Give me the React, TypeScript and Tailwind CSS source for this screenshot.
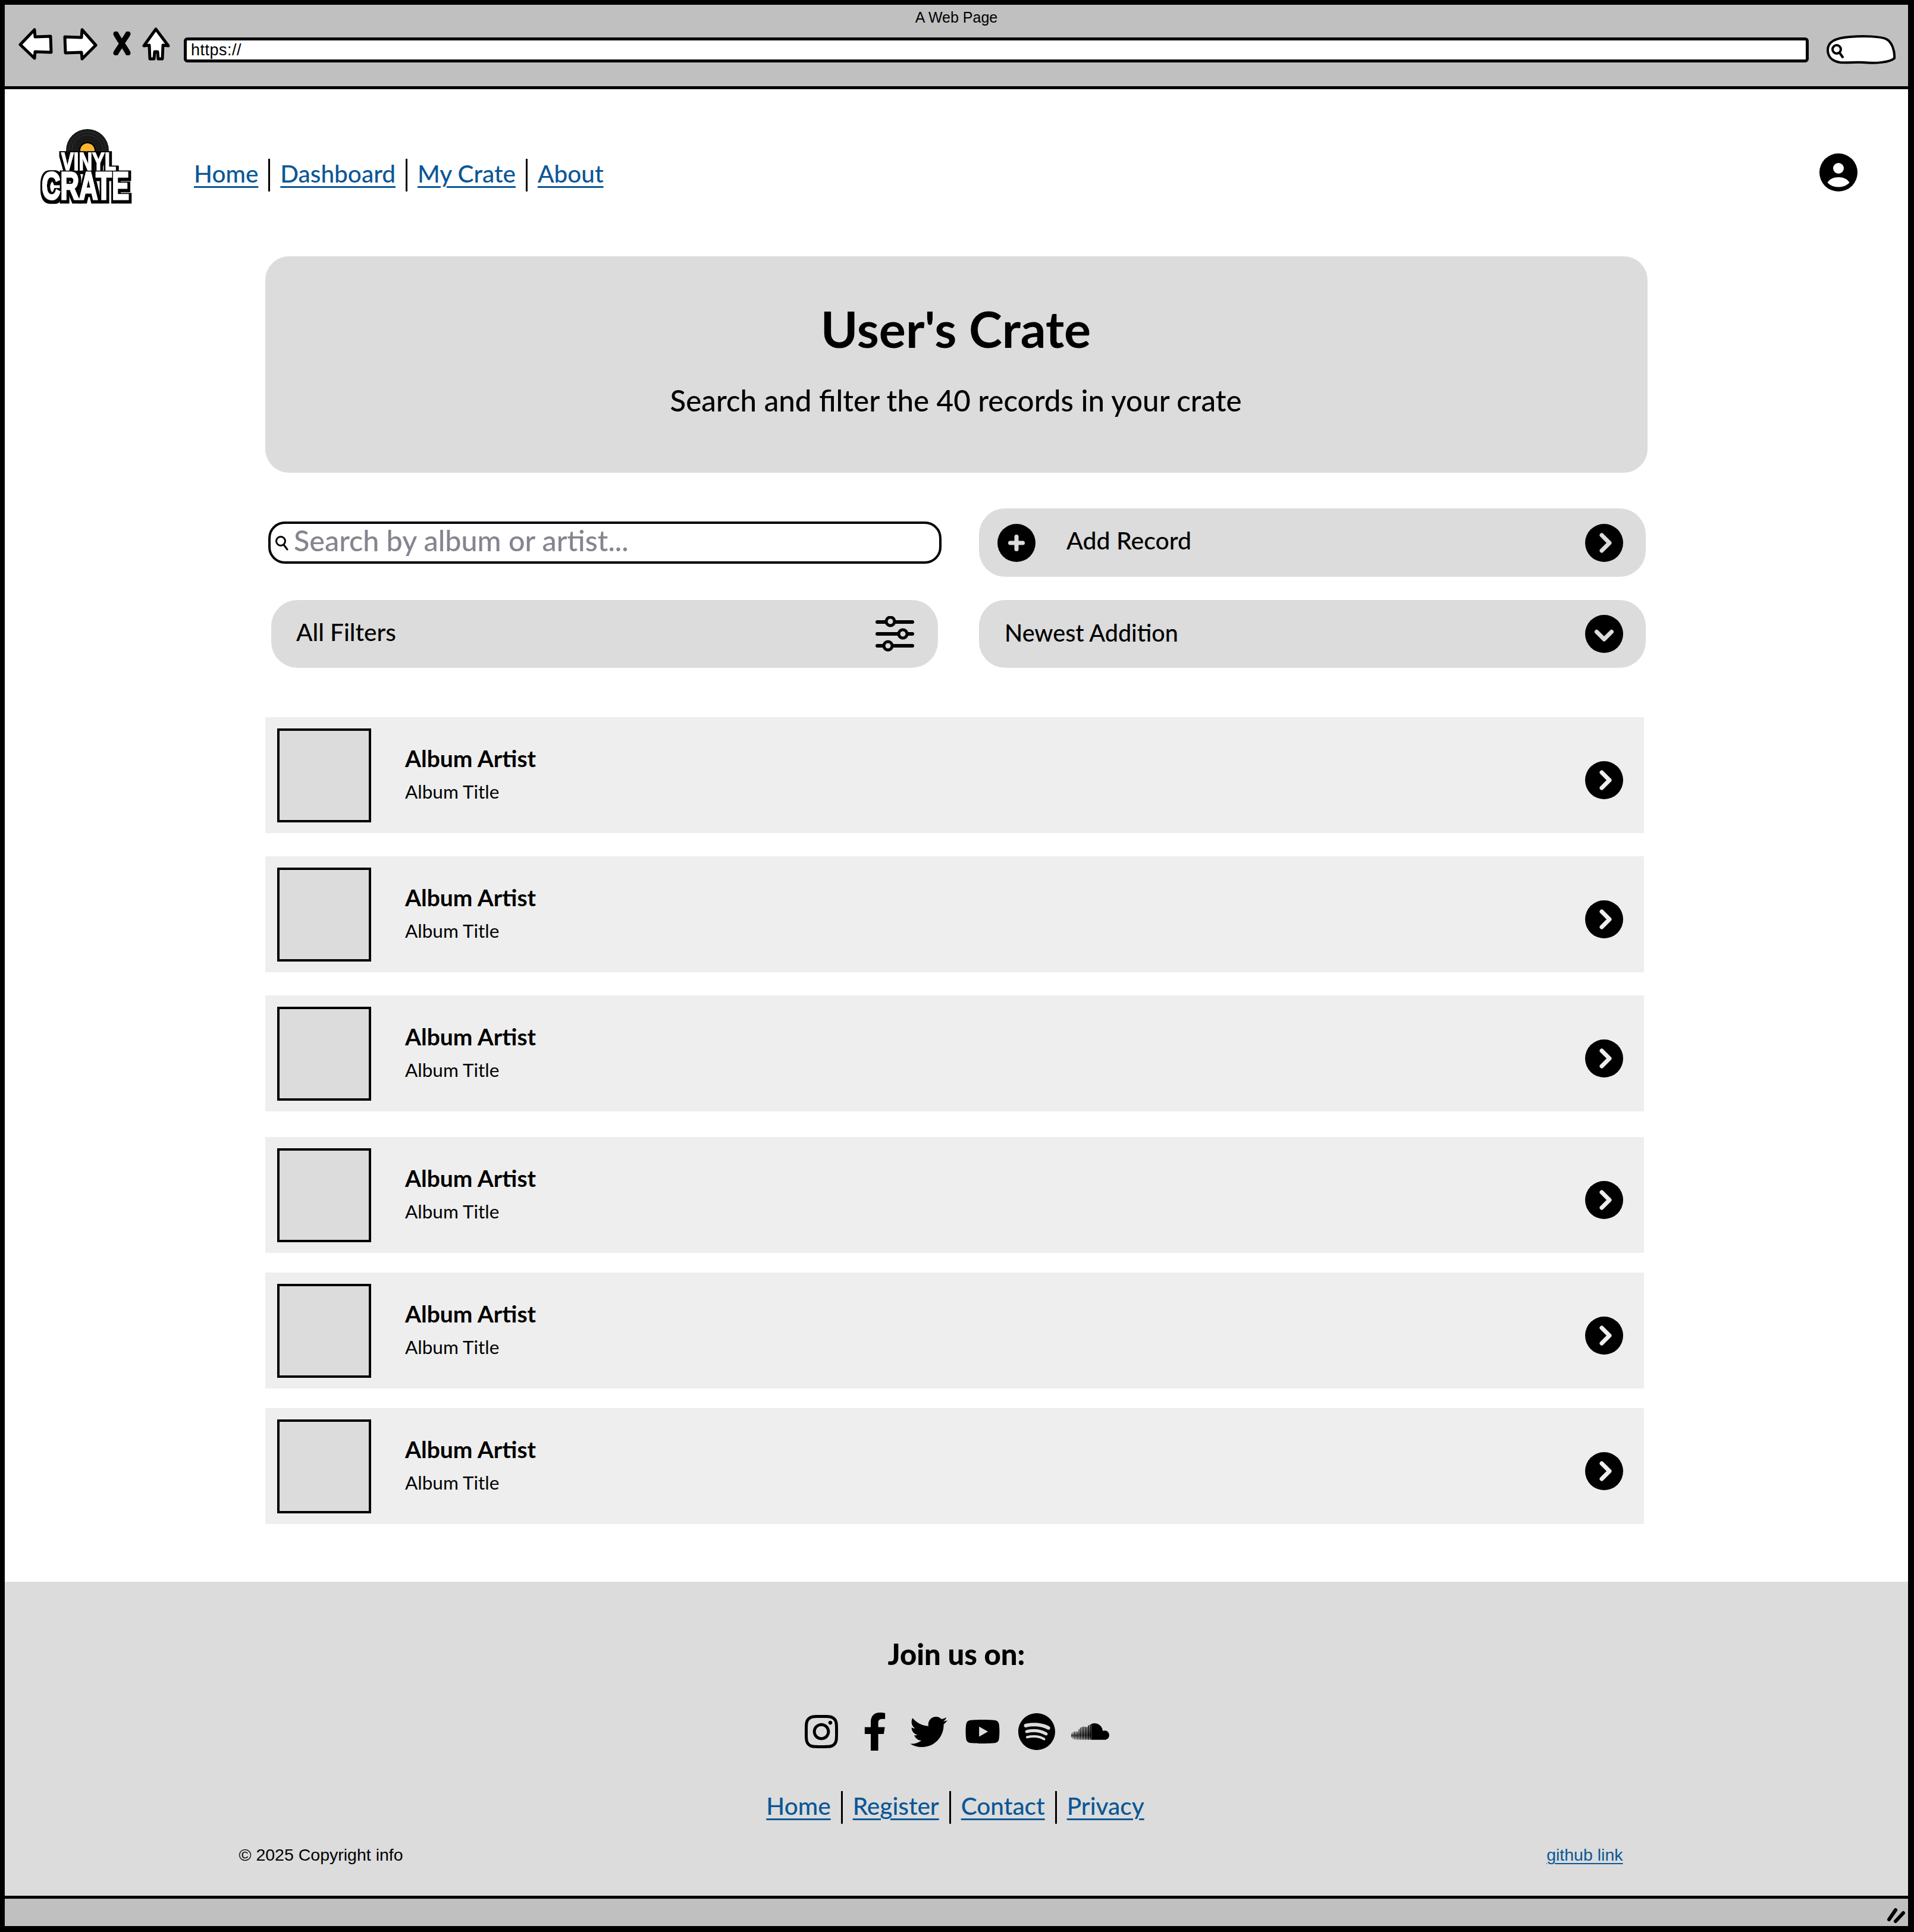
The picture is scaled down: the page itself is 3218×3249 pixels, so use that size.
import { FaInstagram, FaFacebookF, FaTwitter, FaYoutube, FaSpotify, FaSoundcloud } from 'react-icons/fa';

const RECORD_MARGINS = ['mt-0', 'mt-[39px]', 'mt-[39px]', 'mt-[43px]', 'mt-[33px]', 'mt-[33px]'];

function ChevronCircle({ stroke }: { stroke: string }) {
  return (
    <svg width="64" height="64" viewBox="0 0 64 64" className="shrink-0">
      <circle cx="32" cy="32" r="32" fill="#000" />
      <polyline points="28,19 41,32 28,45" fill="none" stroke={stroke} strokeWidth="7" strokeLinecap="round" strokeLinejoin="round" />
    </svg>
  );
}

function ChevronDownCircle() {
  return (
    <svg width="64" height="64" viewBox="0 0 64 64" className="shrink-0">
      <circle cx="32" cy="32" r="32" fill="#000" />
      <polyline points="19.500,28.500 32,41 44.500,28.500" fill="none" stroke="#dcdcdc" strokeWidth="7" strokeLinecap="round" strokeLinejoin="round" />
    </svg>
  );
}

function PlusCircle() {
  return (
    <svg width="64" height="64" viewBox="0 0 64 64" className="shrink-0">
      <circle cx="32" cy="32" r="32" fill="#000" />
      <path d="M32 21.500v21M21.500 32h21" fill="none" stroke="#dcdcdc" strokeWidth="7" strokeLinecap="round" />
    </svg>
  );
}

function Sliders() {
  return (
    <svg width="65" height="60" viewBox="0 0 65 60" className="shrink-0">
      <path d="M3 10h59M3 30h59M3 50h59" stroke="#000" strokeWidth="6" strokeLinecap="round" />
      <circle cx="25" cy="9" r="7" fill="#dcdcdc" stroke="#000" strokeWidth="5" />
      <circle cx="46" cy="30" r="7" fill="#dcdcdc" stroke="#000" strokeWidth="5" />
      <circle cx="21" cy="50" r="7" fill="#dcdcdc" stroke="#000" strokeWidth="5" />
    </svg>
  );
}

function UserIcon() {
  return (
    <svg width="64" height="64" viewBox="0 0 64 64" className="shrink-0">
      <circle cx="32" cy="32" r="32" fill="#000" />
      <circle cx="32" cy="25" r="9" fill="#fff" />
      <path d="M13.500 49C17 43 24 40 32 40s15 3 18.500 9c-4.500 5-11 7.500-18.500 7.500S18 54 13.500 49Z" fill="#fff" />
    </svg>
  );
}

function Logo() {
  return (
    <svg width="156" height="128" viewBox="0 0 156 128" className="shrink-0 overflow-visible">
      <defs>
        <filter id="logoOutline" x="-15%" y="-15%" width="130%" height="130%">
          <feMorphology in="SourceAlpha" operator="dilate" radius="4" result="grown" />
          <feOffset in="grown" dx="1" dy="2" result="moved" />
          <feFlood floodColor="#000" />
          <feComposite in2="moved" operator="in" result="outline" />
          <feMerge>
            <feMergeNode in="outline" />
            <feMergeNode in="SourceGraphic" />
          </feMerge>
        </filter>
      </defs>
      <circle cx="80" cy="36" r="36" fill="#1a1a1a" />
      <circle cx="80" cy="36" r="26" fill="none" stroke="#333" strokeWidth="1" />
      <circle cx="80" cy="36" r="31" fill="none" stroke="#333" strokeWidth="1" />
      <circle cx="80" cy="36" r="13" fill="#fbb62f" stroke="#000" strokeWidth="2" />
      <g filter="url(#logoOutline)" className="font-['Liberation_Sans',sans-serif]">
        <text x="36" y="69" textLength="92" lengthAdjust="spacingAndGlyphs" fontSize="43" fontWeight="700" fill="#fff" stroke="#fff" strokeWidth="1.500">VINYL</text>
        <text x="3" y="118" textLength="147" lengthAdjust="spacingAndGlyphs" fontSize="65" fontWeight="700" fill="#fff" stroke="#fff" strokeWidth="2.500">CRATE</text>
      </g>
    </svg>
  );
}

function LinkRow({ links, className }: { links: string[]; className: string }) {
  return (
    <nav className={`flex items-center gap-[17px] font-['Lato',sans-serif] text-[40.500px] font-medium text-[#0b5796] ${className}`}>
      {links.map((link, index) => (
        <div key={link} className="flex items-center gap-[17px]">
          {index > 0 && <span className="h-[55px] w-[3px] bg-black" />}
          <a href="#" className="pb-[5px] leading-[50px] underline decoration-[3px] underline-offset-[6px]">{link}</a>
        </div>
      ))}
    </nav>
  );
}

function BrowserBar() {
  return (
    <div className="h-[142px] shrink-0 border-b-[5px] border-black bg-[#c0c0c0]">
      <p className="pt-[7px] text-center font-['Liberation_Sans',sans-serif] text-[25px] leading-[28px] text-black">A Web Page</p>
      <div className="mt-[5px] flex items-start pl-[23px]">
        <svg width="58" height="54" viewBox="0 0 58 54" className="mt-[-1px]">
          <path d="M3 28 27 3l1 12 26-1 1 27-27-1-1 11Z" fill="#fff" stroke="#000" strokeWidth="5" strokeLinejoin="round" />
        </svg>
        <svg width="60" height="56" viewBox="0 0 60 56" className="ml-[16px] mt-[-1px]">
          <path d="M56 29 33 3l-1 13-28-1 1 27 27-1 1 11Z" fill="#fff" stroke="#000" strokeWidth="5" strokeLinejoin="round" />
        </svg>
        <svg width="34" height="40" viewBox="0 0 34 40" className="ml-[23px] mt-[5px]">
          <path d="M7 4c3 6 6 10 10 16s7 10 10 16M27 4c-3 6-7 10-10 16S10 30 7 36" fill="none" stroke="#000" strokeWidth="9" strokeLinecap="round" />
        </svg>
        <svg width="48" height="56" viewBox="0 0 48 56" className="ml-[16px] mt-[-2px]">
          <path d="M24 3 4 31l9-1 1 23h7l1-12h5l1 12h7l1-23 9 1Z" fill="#fff" stroke="#000" strokeWidth="5" strokeLinejoin="round" />
        </svg>
        <div className="ml-[23px] mt-[15px] flex h-[42px] w-[2732px] items-center rounded-[6px] border-[5px] border-black bg-white pl-[7px] font-['Liberation_Sans',sans-serif] text-[27px] tracking-[0.5px] text-black">
          https://
        </div>
        <svg width="120" height="50" viewBox="0 0 120 50" className="ml-[29px] mt-[11px]">
          <path d="M24 46C10 44 3 36 3 25 3 12 14 5 40 3c24-2 52-1 62 4 9 5 14 20 13 32-8 7-32 9-52 7-12-1-25 1-39 0Z" fill="#fff" stroke="#000" strokeWidth="4" />
          <circle cx="18" cy="24" r="7" fill="none" stroke="#000" strokeWidth="4" />
          <path d="M23 30l5 7" stroke="#000" strokeWidth="4" strokeLinecap="round" />
        </svg>
      </div>
    </div>
  );
}

function RecordRow({ margin }: { margin: string }) {
  return (
    <div className={`flex h-[195px] items-center bg-[#eeeeee] pl-[20px] pr-[35px] ${margin}`}>
      <div className="h-[158px] w-[158px] shrink-0 border-[4px] border-black bg-[#dcdcdc]" />
      <div className="ml-[57px] flex-1">
        <h3 className="mt-[-4px] text-[39px] font-bold leading-[46px] text-black">Album Artist</h3>
        <p className="mt-[13px] text-[31.500px] leading-[40px] text-black">Album Title</p>
      </div>
      <div className="mt-[16px]">
        <ChevronCircle stroke="#eeeeee" />
      </div>
    </div>
  );
}

function Footer() {
  return (
    <footer className="flex h-[528px] shrink-0 flex-col items-center bg-[#dcdcdc] font-['Lato',sans-serif]">
      <h2 className="mt-[93px] text-[49px] font-black leading-[56px] text-black">Join us on:</h2>
      <div className="mr-[2px] mt-[71px] flex items-center text-black">
        <div className="flex h-[64px] w-[90.500px] justify-center"><FaInstagram size={64} /></div>
        <div className="flex h-[64px] w-[90.500px] justify-center"><FaFacebookF size={64} /></div>
        <div className="flex h-[64px] w-[90.500px] items-center justify-center"><FaTwitter size={63} /></div>
        <div className="flex h-[64px] w-[90.500px] items-center justify-center"><FaYoutube size={60} /></div>
        <div className="flex h-[64px] w-[90.500px] items-center justify-center"><FaSpotify size={64} /></div>
        <div className="flex h-[64px] w-[90.500px] items-center justify-center"><FaSoundcloud size={64} /></div>
      </div>
      <LinkRow links={['Home', 'Register', 'Contact', 'Privacy']} className="mr-[4px] mt-[68px]" />
      <div className="mr-[86px] mt-[34px] flex w-[2327px] items-center justify-between font-['Liberation_Sans',sans-serif] text-[28.500px] leading-[36px]">
        <span className="text-black">© 2025 Copyright info</span>
        <a href="#" className="text-[#0b5796] underline decoration-[2px] underline-offset-[4px]">github link</a>
      </div>
    </footer>
  );
}

export default function App() {
  return (
    <div className="flex h-[3249px] w-[3218px] flex-col border-l-[8px] border-r-[10px] border-t-[8px] border-black bg-white font-['Lato',sans-serif]">
      <BrowserBar />

      <main className="flex-1">
        <header className="flex h-[281px] items-start pl-[59px] pr-[85px] pt-[67px]">
          <Logo />
          <LinkRow links={['Home', 'Dashboard', 'My Crate', 'About']} className="ml-[103px] mt-[50px]" />
          <div className="ml-auto mt-[41px]">
            <UserIcon />
          </div>
        </header>

        <div className="mx-auto w-[2324px]">
          <section className="flex h-[364px] flex-col items-center rounded-[40px] bg-[#dcdcdc]">
            <h1 className="mt-[77px] pr-[2px] text-[84.500px] font-bold leading-[90px] text-black">User's Crate</h1>
            <p className="mt-[46px] pr-[2px] text-[49.300px] font-medium leading-[58px] text-black">Search and filter the 40 records in your crate</p>
          </section>

          <div className="mt-[60px] grid grid-cols-[1144px_1124px] gap-x-[56px] gap-y-[39px]">
            <div className="ml-[5px] flex h-[115px] items-center">
              <label className="flex h-[71px] w-[1132px] items-center rounded-[28px] border-[4px] border-black bg-white pl-[7px]">
                <svg width="24" height="26" viewBox="0 0 24 26" className="shrink-0">
                  <circle cx="10" cy="10" r="7.500" fill="none" stroke="#000" strokeWidth="3" />
                  <path d="M15 16l6 8" stroke="#000" strokeWidth="3" strokeLinecap="round" />
                </svg>
                <input
                  placeholder="Search by album or artist..."
                  className="ml-[8px] w-full bg-transparent pb-[8px] text-[48.500px] font-medium outline-none placeholder:text-[#858590]"
                />
              </label>
            </div>
            <button type="button" className="flex h-[115px] w-[1121px] items-center rounded-[44px] bg-[#dcdcdc] pl-[31px] pr-[38px]">
              <PlusCircle />
              <span className="ml-[52px] flex-1 pb-[8px] text-left text-[41px] font-medium text-black">Add Record</span>
              <ChevronCircle stroke="#dcdcdc" />
            </button>
            <button type="button" className="ml-[10px] flex h-[114px] w-[1121px] items-center justify-between rounded-[44px] bg-[#dcdcdc] pl-[42px] pr-[40px]">
              <span className="pb-[5px] text-[40.500px] font-medium text-black">All Filters</span>
              <Sliders />
            </button>
            <button type="button" className="flex h-[114px] w-[1121px] items-center justify-between rounded-[44px] bg-[#dcdcdc] pl-[43px] pr-[38px]">
              <span className="pb-[5px] text-[39.500px] font-medium text-black">Newest Addition</span>
              <ChevronDownCircle />
            </button>
          </div>

          <div className="mt-[83px] w-[2318px]">
            {RECORD_MARGINS.map((margin, index) => (
              <RecordRow key={index} margin={margin} />
            ))}
          </div>
        </div>
      </main>

      <Footer />

      <div className="flex h-[61px] shrink-0 items-start justify-end border-b-[10px] border-t-[5px] border-black bg-[#c0c0c0] pr-[5px] pt-[15px]">
        <svg width="30" height="26" viewBox="0 0 30 26">
          <path d="M3 20 14 4M14 23 27 9" stroke="#000" strokeWidth="6" strokeLinecap="round" />
        </svg>
      </div>
    </div>
  );
}
